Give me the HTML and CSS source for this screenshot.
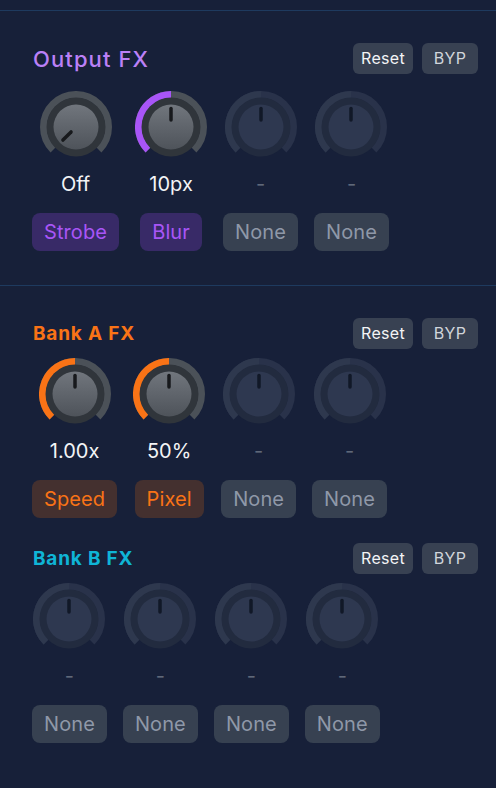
FILE: index.html
```html
<!DOCTYPE html>
<html lang="en">
<head>
<meta charset="utf-8">
<title>FX</title>
<link rel="stylesheet" href="styles.css">
</head>
<body>
<svg class="defs" width="0" height="0" aria-hidden="true">
  <defs>
    <linearGradient id="capGrad" x1="0" y1="0" x2="0" y2="1">
      <stop offset="0" stop-color="#71767d"/>
      <stop offset="1" stop-color="#4e535a"/>
    </linearGradient>
  </defs>
</svg>
<div class="top-space"></div>

<section class="group">
  <div class="head">
    <h2 class="title title-output">Output FX</h2>
    <div class="actions"><button class="act">Reset</button><button class="act byp">BYP</button></div>
  </div>
  <div class="slots first">
    <div class="slot">
      <svg class="knob" viewBox="0 0 72 72"><path class="track" d="M13.02 58.98A32.5 32.5 0 1 1 58.98 58.98"/><circle class="ring" cx="36" cy="36" r="29.5"/><circle class="cap" cx="36" cy="36" r="22.5"/><line class="ptr" x1="31.05" y1="40.95" x2="22.92" y2="49.08"/></svg>
      <div class="val">Off</div>
      <button class="fx fx-purple">Strobe</button>
    </div>
    <div class="slot">
      <svg class="knob" viewBox="0 0 72 72"><path class="track" d="M13.02 58.98A32.5 32.5 0 1 1 58.98 58.98"/><path class="fill purple" d="M13.02 58.98A32.5 32.5 0 0 1 36 3.5"/><circle class="ring" cx="36" cy="36" r="29.5"/><circle class="cap" cx="36" cy="36" r="22.5"/><line class="ptr" x1="36" y1="29" x2="36" y2="17.5"/></svg>
      <div class="val">10px</div>
      <button class="fx fx-purple">Blur</button>
    </div>
    <div class="slot off">
      <svg class="knob" viewBox="0 0 72 72"><path class="track" d="M13.02 58.98A32.5 32.5 0 1 1 58.98 58.98"/><path class="fill" d="M13.02 58.98A32.5 32.5 0 0 1 36 3.5"/><circle class="ring" cx="36" cy="36" r="29.5"/><circle class="cap" cx="36" cy="36" r="22.5"/><line class="ptr" x1="36" y1="29" x2="36" y2="17.5"/></svg>
      <div class="val">-</div>
      <button class="fx">None</button>
    </div>
    <div class="slot off">
      <svg class="knob" viewBox="0 0 72 72"><path class="track" d="M13.02 58.98A32.5 32.5 0 1 1 58.98 58.98"/><path class="fill" d="M13.02 58.98A32.5 32.5 0 0 1 36 3.5"/><circle class="ring" cx="36" cy="36" r="29.5"/><circle class="cap" cx="36" cy="36" r="22.5"/><line class="ptr" x1="36" y1="29" x2="36" y2="17.5"/></svg>
      <div class="val">-</div>
      <button class="fx">None</button>
    </div>
  </div>
</section>

<section class="group banks">
  <div class="bank">
    <div class="head">
      <h2 class="title title-bank title-a">Bank A FX</h2>
      <div class="actions"><button class="act">Reset</button><button class="act byp">BYP</button></div>
    </div>
    <div class="slots">
      <div class="slot">
        <svg class="knob" viewBox="0 0 72 72"><path class="track" d="M13.02 58.98A32.5 32.5 0 1 1 58.98 58.98"/><path class="fill orange" d="M13.02 58.98A32.5 32.5 0 0 1 36 3.5"/><circle class="ring" cx="36" cy="36" r="29.5"/><circle class="cap" cx="36" cy="36" r="22.5"/><line class="ptr" x1="36" y1="29" x2="36" y2="17.5"/></svg>
        <div class="val">1.00x</div>
        <button class="fx fx-orange">Speed</button>
      </div>
      <div class="slot">
        <svg class="knob" viewBox="0 0 72 72"><path class="track" d="M13.02 58.98A32.5 32.5 0 1 1 58.98 58.98"/><path class="fill orange" d="M13.02 58.98A32.5 32.5 0 0 1 36 3.5"/><circle class="ring" cx="36" cy="36" r="29.5"/><circle class="cap" cx="36" cy="36" r="22.5"/><line class="ptr" x1="36" y1="29" x2="36" y2="17.5"/></svg>
        <div class="val">50%</div>
        <button class="fx fx-orange">Pixel</button>
      </div>
      <div class="slot off">
        <svg class="knob" viewBox="0 0 72 72"><path class="track" d="M13.02 58.98A32.5 32.5 0 1 1 58.98 58.98"/><path class="fill" d="M13.02 58.98A32.5 32.5 0 0 1 36 3.5"/><circle class="ring" cx="36" cy="36" r="29.5"/><circle class="cap" cx="36" cy="36" r="22.5"/><line class="ptr" x1="36" y1="29" x2="36" y2="17.5"/></svg>
        <div class="val">-</div>
        <button class="fx">None</button>
      </div>
      <div class="slot off">
        <svg class="knob" viewBox="0 0 72 72"><path class="track" d="M13.02 58.98A32.5 32.5 0 1 1 58.98 58.98"/><path class="fill" d="M13.02 58.98A32.5 32.5 0 0 1 36 3.5"/><circle class="ring" cx="36" cy="36" r="29.5"/><circle class="cap" cx="36" cy="36" r="22.5"/><line class="ptr" x1="36" y1="29" x2="36" y2="17.5"/></svg>
        <div class="val">-</div>
        <button class="fx">None</button>
      </div>
    </div>
  </div>

  <div class="bank">
    <div class="head">
      <h2 class="title title-bank title-b">Bank B FX</h2>
      <div class="actions"><button class="act">Reset</button><button class="act byp">BYP</button></div>
    </div>
    <div class="slots">
      <div class="slot off">
        <svg class="knob" viewBox="0 0 72 72"><path class="track" d="M13.02 58.98A32.5 32.5 0 1 1 58.98 58.98"/><path class="fill" d="M13.02 58.98A32.5 32.5 0 0 1 36 3.5"/><circle class="ring" cx="36" cy="36" r="29.5"/><circle class="cap" cx="36" cy="36" r="22.5"/><line class="ptr" x1="36" y1="29" x2="36" y2="17.5"/></svg>
        <div class="val">-</div>
        <button class="fx">None</button>
      </div>
      <div class="slot off">
        <svg class="knob" viewBox="0 0 72 72"><path class="track" d="M13.02 58.98A32.5 32.5 0 1 1 58.98 58.98"/><path class="fill" d="M13.02 58.98A32.5 32.5 0 0 1 36 3.5"/><circle class="ring" cx="36" cy="36" r="29.5"/><circle class="cap" cx="36" cy="36" r="22.5"/><line class="ptr" x1="36" y1="29" x2="36" y2="17.5"/></svg>
        <div class="val">-</div>
        <button class="fx">None</button>
      </div>
      <div class="slot off">
        <svg class="knob" viewBox="0 0 72 72"><path class="track" d="M13.02 58.98A32.5 32.5 0 1 1 58.98 58.98"/><path class="fill" d="M13.02 58.98A32.5 32.5 0 0 1 36 3.5"/><circle class="ring" cx="36" cy="36" r="29.5"/><circle class="cap" cx="36" cy="36" r="22.5"/><line class="ptr" x1="36" y1="29" x2="36" y2="17.5"/></svg>
        <div class="val">-</div>
        <button class="fx">None</button>
      </div>
      <div class="slot off">
        <svg class="knob" viewBox="0 0 72 72"><path class="track" d="M13.02 58.98A32.5 32.5 0 1 1 58.98 58.98"/><path class="fill" d="M13.02 58.98A32.5 32.5 0 0 1 36 3.5"/><circle class="ring" cx="36" cy="36" r="29.5"/><circle class="cap" cx="36" cy="36" r="22.5"/><line class="ptr" x1="36" y1="29" x2="36" y2="17.5"/></svg>
        <div class="val">-</div>
        <button class="fx">None</button>
      </div>
    </div>
  </div>
</section>
</body>
</html>
```

FILE: styles.css
```css
* { box-sizing: border-box; }

html, body {
  margin: 0;
  padding: 0;
  background: #172039;
  height: 100%;
  overflow: hidden;
}

body {
  font-family: Inter, "Noto Sans", "Liberation Sans", sans-serif;
  color: #f3f4f6;
}

.defs {
  position: absolute;
  width: 0;
  height: 0;
}

.top-space { height: 10px; }

.group {
  border-top: 1px solid #1e3a5f;
  padding: 32px 18px 34px 32px;
}

.banks {
  display: flex;
  flex-direction: column;
  gap: 25px;
}

.head {
  display: flex;
  align-items: center;
  justify-content: space-between;
  height: 31px;
}

.title {
  margin: 0 0 0 1px;
  line-height: 26px;
}

.title-output {
  font-size: 22px;
  font-weight: 500;
  letter-spacing: 1.1px;
  color: #bb80f7;
}

.title-bank {
  font-size: 19px;
  font-weight: 700;
  letter-spacing: 0.8px;
}

.title-a { color: #f97316; }
.title-b { color: #0fb5d6; }

.actions {
  display: flex;
  gap: 9px;
}

.act {
  font-family: inherit;
  font-size: 16px;
  line-height: 19px;
  letter-spacing: 0.3px;
  padding: 6px 8px;
  min-width: 56px;
  border: 0;
  border-radius: 6px;
  background: #384152;
  color: #f3f4f6;
  text-align: center;
}

.act.byp { color: #d1d5db; }

.slots {
  display: flex;
  gap: 16px;
  margin-top: 9px;
}

.slots.first { margin-top: 17px; }

.slot {
  display: flex;
  flex-direction: column;
  align-items: center;
}

.knob {
  display: block;
  width: 72px;
  height: 72px;
}

.track {
  fill: none;
  stroke: #4b5158;
  stroke-width: 7;
}

.fill {
  fill: none;
  stroke-width: 7;
}

.fill.purple { stroke: #a855f7; }
.fill.orange { stroke: #f97316; }

.ring { fill: #30353b; }
.cap { fill: url(#capGrad); }

.ptr {
  stroke: #17191c;
  stroke-width: 3.5;
  stroke-linecap: round;
}

.off .track { stroke: #29324a; }
.off .fill { stroke: #2e384e; }
.off .ring { fill: #222b3f; }
.off .cap { fill: #2e3850; }
.off .ptr { stroke: #111827; }

.val {
  margin-top: 9px;
  font-size: 20px;
  line-height: 24px;
  height: 24px;
  color: #f3f4f6;
}

.off .val { color: #5f6879; }

.fx {
  margin-top: 17px;
  font-family: inherit;
  font-size: 20px;
  line-height: 24px;
  letter-spacing: 0.1px;
  padding: 7px 12px;
  border: 0;
  border-radius: 8px;
  background: #374151;
  color: #8f98a8;
}

.fx-purple {
  background: #382a67;
  color: #a855f7;
}

.fx-orange {
  background: #44302f;
  color: #f97316;
}
```
